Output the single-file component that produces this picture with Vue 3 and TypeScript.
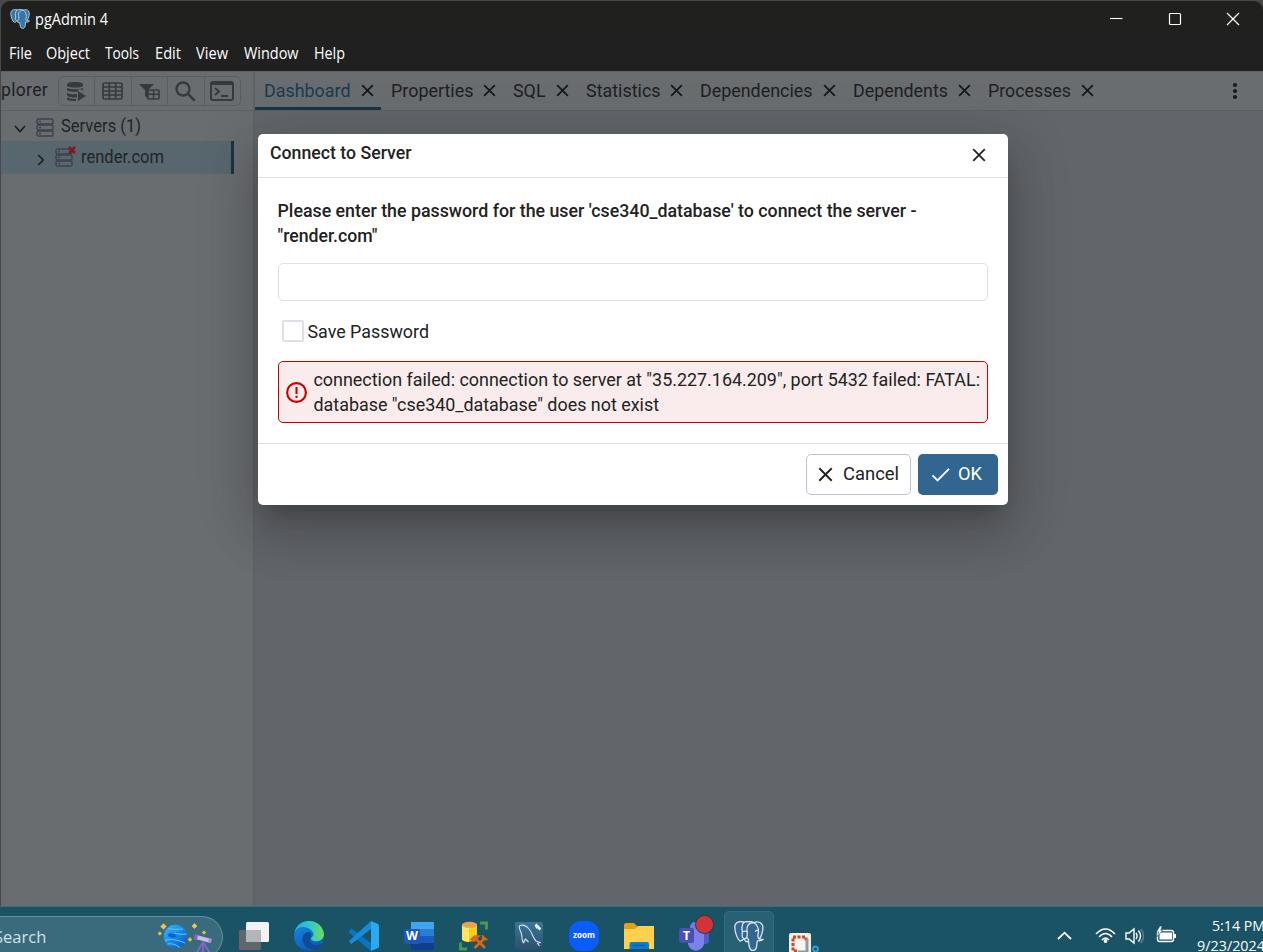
<script setup lang="ts">
interface Item { label: string; width: number; textWidth: number }

const menus: Item[] = [
  { label: 'File', width: 37.5, textWidth: 23 },
  { label: 'Object', width: 59, textWidth: 44 },
  { label: 'Tools', width: 50, textWidth: 34 },
  { label: 'Edit', width: 41, textWidth: 26 },
  { label: 'View', width: 48, textWidth: 32 },
  { label: 'Window', width: 69.5, textWidth: 54.5 },
  { label: 'Help', width: 50, textWidth: 31 },
]

const tabs: Item[] = [
  { label: 'Dashboard', width: 126, textWidth: 86.5 },
  { label: 'Properties', width: 122.5, textWidth: 82.5 },
  { label: 'SQL', width: 72.5, textWidth: 32.5 },
  { label: 'Statistics', width: 114.5, textWidth: 74.5 },
  { label: 'Dependencies', width: 152.5, textWidth: 112.5 },
  { label: 'Dependents', width: 135, textWidth: 95 },
  { label: 'Processes', width: 123, textWidth: 83 },
]

const stars = [
  { x: 5.5, y: 3.5, r: 2.8 },
  { x: 1.8, y: 10.5, r: 1.7 },
  { x: 36.5, y: 3, r: 2.5 },
  { x: 46, y: 9.5, r: 1.7 },
  { x: 32, y: 16.5, r: 1.9 },
]
const starPath = (s: { x: number; y: number; r: number }): string => {
  const k = s.r * 0.45
  return `M${s.x} ${s.y - s.r}l${k} ${s.r - k} ${s.r - k} ${k} ${k - s.r} ${k} ${-k} ${s.r - k} ${-k} ${k - s.r} ${k - s.r} ${-k} ${s.r - k} ${-k}z`
}
</script>

<template>
  <div class="screen">
    <svg width="0" height="0" class="defs">
      <defs>
        <symbol id="elephant" viewBox="0 0 30 30">
          <g stroke="#d8e6ee" stroke-width="1.3" stroke-linejoin="round" stroke-linecap="round">
            <path fill="#336791" d="M10 1.2C6-.2.8.8.8 6.5c0 4 2.3 11.300 4.800 13.200 1.500 1.100 2.700-.3 4.200-2l1.600 2.300c1 .9 2.400.8 3.200.6.2 3.500.4 8.900 4.200 8.900 3 0 3.800-2.600 4-5.600.2-2 .3-3.300.5-4.100 2.200.3 4.700-.2 5.900-1.500-1.100-.1-3.100.2-3.600-.4 2.400-3.700 4.700-11.900 2.400-14.600C26.300.7 22.500.5 19.800 1.500 16.500.3 13.400.2 10 1.200Z"/>
            <path fill="none" d="M10 1.200C6.800 4.500 8.200 8.200 8.300 12c.1 2.300-1.500 3.600 1.500 5.700 2.400.5 3.100-1.200 3.400-3.500.4-3-1-6.100.2-8.800.8-2 2.700-3.700 6.400-3.900M8.500 11c1.400-1.200 4-1.100 5-.2m6.300-9.300c3.200 2.300 4.900 5.600 4.700 9.100-.2 3.300-2.300 5.100 1.100 7.700m-4.100-8c.7-1.100 2.200-1.100 3-.5M14.500 20.500c.3-2-.4-3.200-1.600-4"/>
          </g>
        </symbol>
        <symbol id="elephant-small" viewBox="0 0 20 20">
          <path fill="#3775a4" stroke="#b9d5e6" stroke-width=".9" stroke-linejoin="round" d="M7 .9C4 .1.800.8.800 4.500c0 3 1.500 7.300 3.200 8.600 1 .7 1.800-.2 2.700-1.300l1 1.500c.7.600 1.600.5 2.100.4.200 2.300.3 5.700 2.800 5.700 2 0 2.600-1.700 2.700-3.700l.3-2.700c1.500.2 3.100-.1 3.900-1l-2.300-.3c1.500-2.400 3-7.700 1.500-9.500C17.300.5 15 .4 13.200 1 11 .3 9 .3 7 .9Z"/>
          <path fill="none" stroke="#b9d5e6" stroke-width=".9" d="M7 1C5 3 5.500 5.500 5.600 8c0 1.500-1 2.400 1 3.700 1.600.3 2-.8 2.200-2.200.3-2-.7-4 .1-5.800.6-1.300 1.900-2.400 4.300-2.600 2.100 1.500 3.200 3.600 3.100 6-.1 2.100-1.500 3.300.8 5"/>
        </symbol>
        <symbol id="cross" viewBox="0 0 14 14"><path d="M1.200 1.200 12.800 12.800M12.800 1.200 1.200 12.800" fill="none" stroke="currentColor" stroke-width="1.800"/></symbol>
        <symbol id="server" viewBox="0 0 18 19"><g fill="none" stroke="currentColor" stroke-width="1.400"><rect x="1" y="1" width="16" height="5" rx="1.500"/><rect x="1" y="7" width="16" height="5" rx="1.500"/><rect x="1" y="13" width="16" height="5" rx="1.500"/><path d="M3 3.500h2M3 9.500h2M3 15.500h2"/></g></symbol>
      </defs>
    </svg>

    <div class="window">
      <header class="titlebar">
        <svg class="logo" width="20" height="20"><use href="#elephant-small"/></svg>
        <svg class="apptitle" width="76" height="24"><text x="0" y="17" textLength="73" lengthAdjust="spacingAndGlyphs">pgAdmin 4</text></svg>
        <div class="controls">
          <svg width="14" height="14"><path d="M1 6.500h12.500" stroke="#fff" stroke-width="1.100"/></svg>
          <svg width="14" height="14"><rect x="1.500" y="1.500" width="11" height="11" rx="1" fill="none" stroke="#fff" stroke-width="1.200"/></svg>
          <svg width="14" height="14"><path d="m1 1 12 12M13 1 1 13" stroke="#fff" stroke-width="1.200"/></svg>
        </div>
      </header>
      <nav class="menubar">
        <svg v-for="m in menus" :key="m.label" :width="m.width" height="26"><text x="0" y="19" :textLength="m.textWidth" lengthAdjust="spacingAndGlyphs">{{ m.label }}</text></svg>
      </nav>

      <div class="workspace">
        <aside class="explorer">
          <div class="explorer-head">
            <span class="explorer-title">plorer</span>
            <div class="tools">
              <span><svg width="20" height="20" viewBox="0 0 20 20"><g fill="currentColor"><path d="M1 3.500C1 .3 17 .3 17 3.500v1C17 7.200 1 7.200 1 4.500ZM1 7c2.500 1.700 13 1.700 16 0v2.200l-5-1.700v3.200H8C4 10.700 1 10 1 8.700Zm0 5c2 1.300 7 1.500 10 1.200v3.200C6 16.600 1 16 1 14Zm0 4.600c2 1.100 6 1.500 9 1.300V20C5 20 1 19.500 1 18Z"/><path d="m12 10 8 5-8 5z"/></g></svg></span>
              <span><svg width="21" height="18" viewBox="0 0 21 18"><g fill="none" stroke="currentColor" stroke-width="1.700"><rect x="1" y="1" width="19" height="16" rx="1.500"/><path d="M1 5h19M1 9h19M1 13h19M7.300 1v16M13.700 1v16"/></g></svg></span>
              <span><svg width="21" height="17" viewBox="0 0 21 17"><path d="M0 1h15L9 7v9l-3-3V7Z" fill="currentColor"/><rect x="9" y="7" width="11" height="9" rx="1" fill="#6a6d70" stroke="currentColor" stroke-width="1.600"/><path d="M9 11.300h11M14.500 7v9" stroke="currentColor" stroke-width="1.400"/></svg></span>
              <span><svg width="21" height="21" viewBox="0 0 21 21"><circle cx="8" cy="8" r="6.500" fill="none" stroke="currentColor" stroke-width="2.300"/><path d="m12.700 12.700 7 7" stroke="currentColor" stroke-width="2.600"/></svg></span>
              <span><svg width="24" height="20" viewBox="0 0 24 20"><rect x="1" y="1" width="22" height="18" rx="2" fill="none" stroke="currentColor" stroke-width="2"/><path d="M1 2.800h22" stroke="currentColor" stroke-width="2.400"/><path d="m5 7 4 3.500L5 14M11 15h7" fill="none" stroke="currentColor" stroke-width="2"/></svg></span>
            </div>
          </div>
          <div class="tree-row">
            <svg class="chev-down" width="12" height="8"><path d="m1 1 5 5.500L11 1" fill="none" stroke="#1b1e20" stroke-width="1.600"/></svg>
            <svg class="server-icon" width="18" height="19"><use href="#server"/></svg>
            <svg class="tree-text" width="90" height="24"><text x="0" y="18" textLength="80" lengthAdjust="spacingAndGlyphs">Servers (1)</text></svg>
          </div>
          <div class="tree-row selected">
            <svg class="chev-right" width="8" height="12"><path d="m1.200 1 5 5-5 5" fill="none" stroke="#1b1e20" stroke-width="1.600"/></svg>
            <span class="server-wrap"><svg width="18" height="19"><use href="#server"/></svg><svg class="badge" width="8" height="8"><path d="m1 1 6 6M7 1 1 7" stroke="#8d0c1b" stroke-width="2.500"/></svg></span>
            <svg class="tree-text" width="90" height="24"><text x="0" y="17" textLength="83" lengthAdjust="spacingAndGlyphs">render.com</text></svg>
          </div>
        </aside>
        <main class="content">
          <div class="tabs">
            <div v-for="(t, i) in tabs" :key="t.label" class="tab" :class="{ active: i === 0 }" :style="{ width: t.width + 'px' }">
              <svg :width="t.textWidth" height="26"><text x="0" y="19" :textLength="t.textWidth" lengthAdjust="spacingAndGlyphs">{{ t.label }}</text></svg>
              <svg class="tab-x" width="13" height="13"><use href="#cross"/></svg>
            </div>
            <svg class="kebab" width="6" height="18"><g fill="#181b1d"><circle cx="3" cy="3" r="2.100"/><circle cx="3" cy="9" r="2.100"/><circle cx="3" cy="15" r="2.100"/></g></svg>
          </div>
        </main>
      </div>
    </div>

    <section class="dialog">
      <header class="dialog-head">
        <svg width="150" height="26"><text x="0" y="18.300" textLength="141.500" lengthAdjust="spacingAndGlyphs">Connect to Server</text></svg>
        <svg class="dialog-x" width="14" height="14"><use href="#cross"/></svg>
      </header>
      <div class="dialog-body">
        <svg class="prompt" width="710" height="50">
          <text x="-.5" y="19.300" textLength="639" lengthAdjust="spacingAndGlyphs">Please enter the password for the user 'cse340_database' to connect the server -</text>
          <text x="-.5" y="44.300" textLength="100" lengthAdjust="spacingAndGlyphs">"render.com"</text>
        </svg>
        <div class="password"></div>
        <div class="save">
          <span class="check"></span>
          <svg width="130" height="26"><text x="-.5" y="20" textLength="121.500" lengthAdjust="spacingAndGlyphs">Save Password</text></svg>
        </div>
        <div class="error">
          <svg class="alert" width="22" height="22"><circle cx="10.500" cy="11.500" r="9.400" fill="none" stroke="#cc0000" stroke-width="2.100"/><path d="M10.500 6v7M10.500 14.800v2.200" stroke="#cc0000" stroke-width="2.100"/></svg>
          <svg width="670" height="50">
            <text x="-.5" y="19" textLength="666.500" lengthAdjust="spacingAndGlyphs">connection failed: connection to server at "35.227.164.209", port 5432 failed: FATAL:</text>
            <text x="-.5" y="44" textLength="345.500" lengthAdjust="spacingAndGlyphs">database "cse340_database" does not exist</text>
          </svg>
        </div>
      </div>
      <footer class="dialog-foot">
        <div class="btn cancel"><svg width="15" height="15"><use href="#cross"/></svg><svg width="56" height="26"><text x="0" y="18" textLength="56" lengthAdjust="spacingAndGlyphs">Cancel</text></svg></div>
        <div class="btn ok"><svg width="18" height="15"><path d="m.5 8.300 5 5L17 1.800" fill="none" stroke="#fff" stroke-width="1.900"/></svg><svg width="25" height="26"><text x="0" y="18" textLength="24" lengthAdjust="spacingAndGlyphs">OK</text></svg></div>
      </footer>
    </section>

    <footer class="taskbar">
      <div class="search">
        <span class="search-label">Search</span>
        <svg width="55" height="30" viewBox="0 0 55 30">
          <defs><linearGradient id="planet" x1="0" y1="0" x2="1" y2="1"><stop stop-color="#3fb6f8"/><stop offset=".5" stop-color="#1688e6"/><stop offset="1" stop-color="#0a50c8"/></linearGradient></defs>
          <circle cx="17.500" cy="13.500" r="11.700" fill="url(#planet)"/>
          <g fill="none" stroke="#5cc0fa" stroke-width="1.100"><path d="M10 5.500q7 1.500 15 .5M16 10q7 2 12.500 1M7 17.500q8-3 20 2.500M9.500 21q7-1 12 3.500"/></g>
          <ellipse cx="14" cy="12.500" rx="4" ry="2" fill="#0a62cc" transform="rotate(12 14 12.500)"/>
          <path v-for="s in stars" :key="s.x" :d="starPath(s)" fill="#f6c63d" stroke="#f6c63d" stroke-width=".8"/>
          <path d="m45 19-6.500 11M45 19v11M45 19l7 11" stroke="#8b64ca" stroke-width="1.700"/>
          <path d="m39 14.300 13 3.500" stroke="#c9bde6" stroke-width="4.200"/><path d="m36.500 13.600 3 .9" stroke="#8764d2" stroke-width="5.500"/><path d="m50.500 17.400 3 .8" stroke="#a78be0" stroke-width="4.500"/>
        </svg>
      </div>
      <div class="apps">
        <div><svg width="30" height="30"><rect y="9" width="22" height="20" rx="1.500" fill="#60666a"/><rect x="7" y="1" width="23" height="20" rx="1.500" fill="#f1f3f4"/><path d="M7 9h15v12H7z" fill="#b2b6b8"/></svg></div>
        <div><svg width="30" height="30" viewBox="0 0 30 30"><defs><linearGradient id="edgeTop"><stop stop-color="#20afe5"/><stop offset=".6" stop-color="#36cbc2"/><stop offset="1" stop-color="#72df49"/></linearGradient><linearGradient id="edgeBlue" x1="0" y1="0" x2=".5" y2="1"><stop stop-color="#168bde"/><stop offset="1" stop-color="#0b5cba"/></linearGradient></defs><circle cx="15" cy="15" r="15" fill="url(#edgeBlue)"/><path d="M.5 12C3 5 12 4.500 17 9c3 2.700 3 5.500.8 7.200-2 1.600.2 4.300 5.200 4 4.500-.3 7-3.500 7-7C29.500 5.500 23 0 15 0 7 0 1.500 5.500.5 12Z" fill="url(#edgeTop)"/><path d="M15.500 11c-5 0-7.500 4-7 8 .5 6 7.500 11 14 9 3-.9 5-3.500 6-5.500-5 3-10.500 1.500-12.200-1.500-1.500-2.800 1-4 1-6.800 0-1.500-.5-2.500-1.800-3.200Z" fill="#104b94"/></svg></div>
        <div><svg width="30" height="30" viewBox="0 0 30 30"><path d="m0 10 2.500-2.500L22 22v8L1 12.500Q-.5 11 0 10z" fill="#0875c4"/><path d="M0 20 22 0v8L3 22.500q-1 .5-1.500 0z" fill="#158bdc"/><path d="m22 0 7 3c.7.500 1 1 1 2v20c0 1-.3 1.700-1 2l-7 3z" fill="#29a9f2"/></svg></div>
        <div><svg width="30" height="30" viewBox="0 0 30 30"><path d="M7 1h23v7H7z" fill="#41a5ee"/><path d="M7 8h23v7H7z" fill="#2b7cd3"/><path d="M7 15h23v7H7z" fill="#185abd"/><path d="M7 22h23v7H7z" fill="#103f91"/><rect y="8" width="16" height="15" rx="1.500" fill="#1b58b8"/><text class="icon-letter" x="2" y="19" textLength="12" lengthAdjust="spacingAndGlyphs">W</text></svg></div>
        <div><svg width="30" height="30" viewBox="0 0 30 30"><path d="M3 3.500v14c0 4 15 4 15 0v-14z" fill="#f5cf17"/><path d="M3 4v14c0 2 4 3 7 3V4z" fill="#ffe465"/><ellipse cx="10.500" cy="3.800" rx="7.600" ry="3" fill="#eda052"/><path d="M21 2h6.500v6.500M1.500 21.500V28H8" fill="none" stroke="#459c49" stroke-width="2.800"/><path d="m16 17 10 10M25 18l-9.500 9" stroke="#dc6814" stroke-width="2.600"/><path d="m11.500 18.500 4-3.500h5l-5.500 5.500zM23.500 14v4.500h5M24 19l3-1" fill="#dc6814" stroke="#dc6814" stroke-width="1.300"/></svg></div>
        <div><svg width="29" height="30" viewBox="0 0 29 30"><defs><linearGradient id="sql" x2="0" y2="1"><stop stop-color="#397897"/><stop offset="1" stop-color="#2a4f6c"/></linearGradient></defs><rect y="1" width="28" height="28" rx="2" fill="url(#sql)"/><path d="M8.500 22C6 18 7.500 15 6 11.500 4.500 8 3.500 5 5 4.500c3-1 6.500.5 9 3.500 3.500 4 3.500 8.500 7 12l4 1.500-2.500 1 2 2.500M8.500 22c1-1 1-3 2-4l3 3" fill="none" stroke="#d7e4ec" stroke-width="1.100"/><path d="m20.500 3.500 2 2-1.800 1.200M22.500 5.500l2.800 3" fill="none" stroke="#eef3f5" stroke-width="2.600"/></svg></div>
        <div><svg width="30" height="30"><rect width="30" height="30" rx="12" fill="#0b5cff"/><text class="zoom-word" x="4" y="17" textLength="22" lengthAdjust="spacingAndGlyphs">zoom</text></svg></div>
        <div><svg width="30" height="30"><path d="M0 4q0-2 2-2h8l4 4H29v8H0z" fill="#e6a00e"/><path d="M0 8h11l3-3h16v23H0z" fill="#ffd04b"/><path d="M5.500 28v-5q0-2 2-2h15.500q2 0 2 2v5" fill="#087bd3"/><path d="M8.500 24.500h13" stroke="#045ca7" stroke-width="1.400"/></svg></div>
        <div class="teams"><svg width="30" height="36" viewBox="0 0 30 36"><circle cx="16" cy="12" r="5" fill="#747be5"/><rect x="22" y="14" width="8" height="15" rx="3" fill="#5059c9"/><path d="M9 14h16v12a8 8 0 0 1-16 3z" fill="#7b83eb"/><rect y="13" width="15" height="15" rx="2" fill="#4950b5"/><text class="icon-letter" x="4" y="24.500" textLength="7" lengthAdjust="spacingAndGlyphs">T</text></svg><i></i></div>
        <div class="running"><svg width="30" height="30"><use href="#elephant"/></svg></div>
        <div class="snip"><svg width="31" height="30"><rect x="0" y="1" width="22" height="24" rx="2" fill="#eef0f0"/><rect x="4" y="5" width="13" height="14" fill="none" stroke="#d84416" stroke-width="3" stroke-dasharray="3 1.500"/><path d="M8 9h12v12H8z" fill="#f4f4f3"/><path d="M18 7v13H9" fill="none" stroke="#929798" stroke-width="3"/><circle cx="26.500" cy="17" r="2.500" fill="none" stroke="#2a9ed8" stroke-width="2"/></svg></div>
      </div>
      <div class="tray">
        <svg class="up" width="15" height="9"><path d="m1 8 6.500-6.300L14 8" fill="none" stroke="#fff" stroke-width="1.800"/></svg>
        <svg class="wifi" width="21" height="17"><g fill="none" stroke="#fff" stroke-width="1.500"><path d="M1 7q9.500-10 19 0M4 10q6.500-7 13 0M7 13q3.500-4 7 0"/></g><circle cx="10.500" cy="14" r="1.900" fill="#fff"/></svg>
        <svg class="volume" width="20" height="18"><g fill="none" stroke="#fff" stroke-width="1.400"><path d="M1 6h3l5-4v14l-5-4H1zM11 6q2.200 3 0 6M13.500 3.500q4 5.500 0 11"/><path d="M16 2q5 7 0 14" stroke="#5b8391"/></g></svg>
        <svg class="battery" width="21" height="18"><rect x="1.500" y="4.500" width="16" height="11" rx="2" fill="none" stroke="#fff" stroke-width="1.400"/><path d="M3.500 6.500h12.500v7H3.500z" fill="#fff"/><path d="M18 8h2v4h-2z" fill="#fff"/><path d="M4 0 .3 6H2.500l-1 4.500L6.800 4.300H4.800L6 0z" fill="#fff" stroke="#1a5266" stroke-width=".6"/></svg>
        <svg class="clock" width="66" height="42"><text x="15" y="19" textLength="53" lengthAdjust="spacingAndGlyphs">5:14 PM</text><text x="0" y="39" textLength="68" lengthAdjust="spacingAndGlyphs">9/23/2024</text></svg>
      </div>
    </footer>
  </div>
</template>

<style>
body { margin: 0; overflow: hidden; }
</style>

<style scoped>
.screen { position: relative; width: 1263px; height: 952px; overflow: hidden; background: #484848; font-family: Roboto, sans-serif; font-size: 17.5px; color: #222; }
.screen *, .screen { box-sizing: border-box; }
svg { display: block; flex: none; }
.defs { position: absolute; }
.window { height: 906px; padding: 1px 0 0 1px; }
.titlebar { height: 36px; border-radius: 9px 9px 0 0; background: #20201f; display: flex; align-items: flex-start; padding: 7px 23px 0 9px; }
.logo { margin-top: 1px; }
.apptitle { margin-left: 5px; }
.titlebar text, .menubar text { font: 15px "Open Sans", sans-serif; fill: #fff; }
.titlebar text { font-size: 15.5px; }
.menubar text { font-size: 15.5px; }
.controls { margin-left: auto; display: flex; gap: 44.500px; padding-top: 4px; }
.menubar { height: 34px; background: #202020; display: flex; padding: 3px 0 0 7.500px; }
.workspace { height: 835px; display: flex; }
.explorer { width: 254px; border-right: 2px solid #5f6265; background: #6a6d70; border-top: 1px solid #606060; }
.explorer-head { height: 39px; border-bottom: 1px solid #5c6064; display: flex; padding-top: 4px; }
.explorer-title { width: 57px; color: #1d2022; line-height: 28px; letter-spacing: .35px; }
.tools { display: flex; width: 183px; height: 30px; border: 1px solid #5a5e62; border-radius: 5px; color: #363a3d; }
.tools span { flex: 1; display: flex; align-items: center; justify-content: center; padding-right: 1px; }
.tools span + span { border-left: 1px solid #5a5e62; }
.tree-row { height: 30px; display: flex; align-items: center; color: #3e3f4b; }
.tree-row text { font: 17.5px Roboto, sans-serif; fill: #202427; }
.chev-down { margin: 6px 10px 0 12.500px; }
.server-icon { margin-top: 2px; margin-right: 7px; }
.selected { width: 233px; height: 33px; background: #58666e; border-right: 3px solid #193448; }
.chev-right { margin: 4px 10px 0 35.500px; }
.server-wrap { position: relative; margin-right: 8px; opacity: .9; }
.badge { position: absolute; right: -3px; top: -2px; }
.content { flex: 1; background: #62656a; }
.tabs { height: 40px; background: #6a6d70; border-top: 1px solid #606060; border-bottom: 1px solid #5c6064; display: flex; }
.tab { height: 38px; padding: 6px 0 0 9px; display: flex; align-items: flex-start; justify-content: flex-start; }
.tab text { font: 17.5px Roboto, sans-serif; fill: #1d2022; }
.tab + .tab { padding-left: 9.500px; }
.tab-x { margin: 5.500px 0 0 10px; color: #15181a; }
.active { border-bottom: 3px solid #193448; }
.active text { fill: #1b3a54; }
.kebab { margin: 10px 25px 0 auto; }
.dialog { position: absolute; left: 258px; top: 134px; width: 750px; height: 371px; border-radius: 5px; background: #fff; box-shadow: 0 14px 19px -9px rgba(0,0,0,.2), 0 30px 48px 4px rgba(0,0,0,.14), 0 11px 58px 10px rgba(0,0,0,.12); overflow: visible; }
.dialog text { font: 17.5px Roboto, sans-serif; fill: #222; }
.dialog svg { overflow: visible; }
.dialog-head { height: 44px; display: flex; justify-content: space-between; border-bottom: 1px solid #dde0e6; padding: 7px 22px 0 12px; }
.dialog-head text, .dialog .prompt text { font-weight: 500; }
.dialog-x { margin-top: 7px; }
.dialog-body { height: 265px; padding: 20px 20px 0; }
.password { height: 38px; margin-top: 15px; border: 1px solid #dde0e6; border-radius: 5px; }
.save { display: flex; align-items: center; height: 26px; margin: 17px 0; padding-left: 4px; }
.check { width: 22px; height: 22px; border: 2px solid #dde0e6; border-radius: 2px; margin-right: 4px; }
.error { height: 62px; border: 1px solid #cc0000; border-radius: 5px; background: #faecec; display: flex; align-items: center; padding-left: 7px; }
.alert { margin-right: 6px; }
.dialog-foot { height: 62px; border-top: 1px solid #dde0e6; display: flex; justify-content: flex-end; gap: 7px; padding: 10px 10px 0 0; }
.btn { height: 41px; border-radius: 5px; display: flex; align-items: center; }
.cancel { width: 105px; border: 1px solid #bac1cf; padding-left: 11px; gap: 10px; }
.ok { width: 80px; background: #326690; padding-left: 14px; gap: 8px; }
.dialog .ok text { fill: #fff; }
.taskbar { height: 46px; background: #1a5266; border-top: 1px solid #446875; display: flex; overflow: hidden; }
.search { width: 223px; height: 42px; margin-top: 9px; background: #3a6b7d; border: 1px solid #64909d; border-left: 0; border-radius: 0 21px 21px 0; display: flex; padding-top: 6px; flex: none; }
.search-label { width: 158px; margin-left: -6px; margin-right: 6px; color: #d4e1e6; font: 16.5px/28px "Open Sans", sans-serif; }
.apps { display: flex; margin-left: 6px; margin-top: 4px; }
.apps > div { width: 50px; height: 46px; margin-right: 5px; display: flex; justify-content: center; padding-top: 10px; }
.icon-letter { font: bold 12px "Open Sans", sans-serif; fill: #fff; }
.zoom-word { font: bold 8px "Open Sans", sans-serif; fill: #fff; }
.apps .teams { position: relative; padding-top: 4px; }
.teams i { position: absolute; left: 26px; top: 4px; width: 19px; height: 19px; border: 1px solid #35373e; border-radius: 50%; background: #d13438; }
.apps .running { background: #286074; border: 1px solid #346c7e; border-radius: 5px; padding-top: 9px; }
.apps .snip { padding-top: 21px; }
.tray { margin-left: auto; display: flex; align-items: flex-start; flex: none; }
.up { margin: 24px 23px 0 0; }
.wifi { margin: 20px 9px 0 0; }
.volume { margin: 20px 11px 0 0; }
.battery { margin: 19px 20px 0 0; }
.clock text { font: 15px "Open Sans", sans-serif; fill: #fff; }
.clock { margin-top: 5px; }
</style>
